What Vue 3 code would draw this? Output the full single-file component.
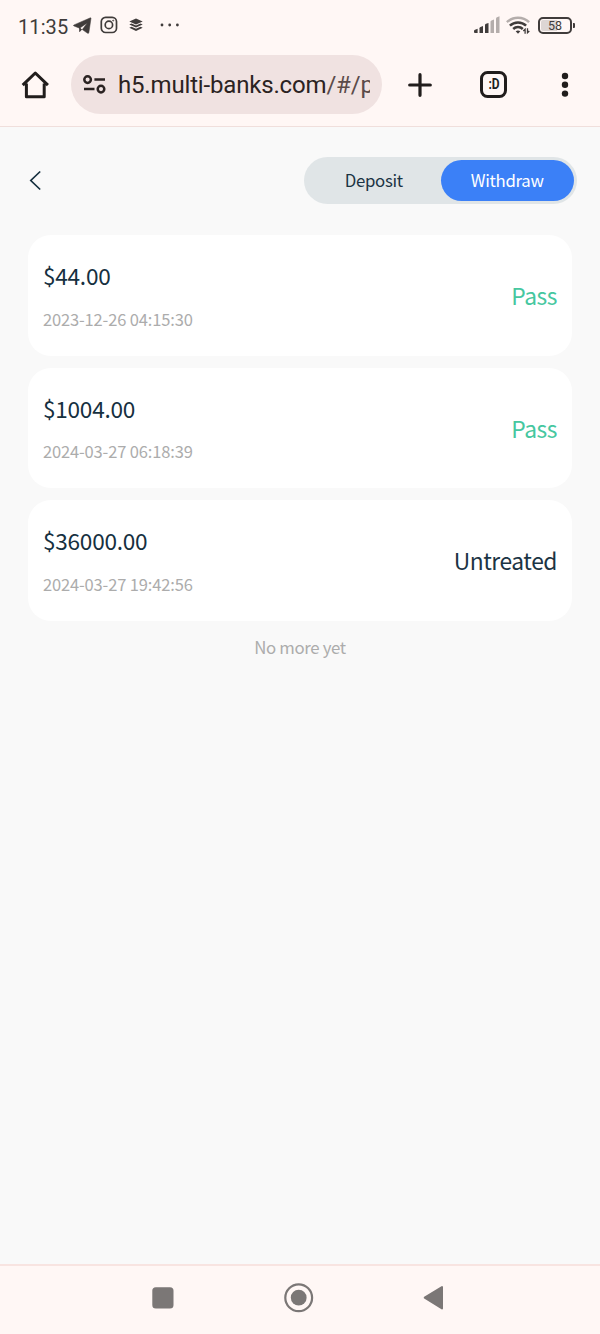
<script setup>
import { ref } from 'vue'

const tabs = ['Deposit', 'Withdraw']
const active = ref('Withdraw')
const records = [
  { amount: '$44.00', time: '2023-12-26 04:15:30', status: 'Pass' },
  { amount: '$1004.00', time: '2024-03-27 06:18:39', status: 'Pass' },
  { amount: '$36000.00', time: '2024-03-27 19:42:56', status: 'Untreated' },
]
</script>

<template>
  <div class="screen">
    <header class="chrome">
      <div class="status">
        <div class="status-left">
          <span class="clock">11:35</span>
          <svg class="telegram" width="19" height="18" viewBox="0 0 19 18">
            <path d="M18 1.300 15.900 15.400q-.3 1.500-1.600.7L9.300 12.600 14.300 6 6.600 11.200 1 9q-1.200-.5 0-1.100L16.900 1q1.200-.5 1.100.3Z" fill="#403c3b" stroke="#403c3b" stroke-width=".5" />
            <path d="M6.700 11 8.600 12.500 6.700 14.600Z" fill="#403c3b" stroke="#403c3b" stroke-width=".9" />
          </svg>
          <svg class="insta" width="18" height="18" viewBox="0 0 18 18" fill="none" stroke="#403c3b">
            <rect x="1.300" y="1.300" width="15.200" height="15.200" rx="4.300" stroke-width="1.700" />
            <circle cx="8.900" cy="8.900" r="3.700" stroke-width="1.700" />
            <circle cx="13.200" cy="4.600" r=".5" stroke-width="1" />
          </svg>
          <svg class="layers" width="14" height="14" viewBox="0 0 14 14" fill="#403c3b">
            <path d="M7 .5 13.700 3.500 7 6.500.3 3.500Z" />
            <path d="m.3 6.400 2.200-1L7 7.500l4.500-2.100 2.200 1L7 9.600Z" />
            <path d="m.3 9.700 2.200-1L7 10.800l4.500-2.100 2.200 1L7 12.900Z" />
          </svg>
          <svg class="dots" width="20" height="4" viewBox="0 0 20 4" fill="#403c3b">
            <circle cx="2" cy="2" r="1.400" /><circle cx="9.700" cy="2" r="1.400" /><circle cx="17.400" cy="2" r="1.400" />
          </svg>
        </div>
        <div class="status-right">
          <svg width="26" height="18" viewBox="0 0 26 18">
            <g fill="#403c3b">
              <path d="M0 15q0-.8 1-1.200l2.600-1V17H1q-1 0-1-1Z" />
              <path d="M5.500 12.200q0-.9 1-1.300l2.500-.9v7H5.500Z" />
              <path d="M11 9.100q0-.9 1-1.300l2.500-.9V17H11Z" />
            </g>
            <g fill="#b4adab">
              <path d="M16.500 5.700q0-.9 1-1.300l2.500-.9V17h-3.500Z" />
              <path d="M22 2.500q0-.9 1-1.300l2.500-.9V17H22Z" />
            </g>
          </svg>
          <svg class="wifi" width="25" height="20" viewBox="0 0 25 20" fill="none" stroke-width="2.500">
            <path d="M.9 7.200A16 16 0 0 1 23.100 7.200" stroke="#b4adab" />
            <path d="M3.900 10.700A11.700 11.700 0 0 1 20.100 10.700M7.200 14A7 7 0 0 1 16.800 14" stroke="#403c3b" />
            <path d="M9.700 16.200q2.300-1.500 4.600 0L12 18.800Z" fill="#403c3b" />
            <path d="m17.300 16 1.800-1.800v4.600M23.300 16l-1.800 1.800v-4.600" stroke="#403c3b" stroke-width="1.300" />
          </svg>
          <div class="battery"><span>58</span></div>
          <i class="battery-tip"></i>
        </div>
      </div>
      <div class="toolbar">
        <svg class="home" width="28" height="28" viewBox="0 0 28 28" fill="none" stroke="#211d1c" stroke-width="3" stroke-linejoin="round">
          <path d="M1.700 14.200 14.300 2l12.600 12.200M5.400 12.500v13.200h17.800V12.500" />
        </svg>
        <div class="address">
          <svg width="24" height="20" viewBox="0 0 24 20" fill="none" stroke="#2b2322" stroke-width="2.500">
            <circle cx="4.600" cy="4.600" r="3.300" /><circle cx="18" cy="14.100" r="3.300" />
            <path d="M11.400 4.600H22M1 14.100h10.500" />
          </svg>
          <div class="url">h5.multi-banks.com<span>/#/p</span></div>
        </div>
        <svg class="plus" width="24" height="24" viewBox="0 0 24 24" stroke="#211d1c" stroke-width="3.200" stroke-linecap="round">
          <path d="M12 1.700v20.600M1.700 12h20.600" />
        </svg>
        <div class="tab-count"><span>:D</span></div>
        <svg class="kebab" width="8" height="26" viewBox="0 0 8 26" fill="#211d1c">
          <circle cx="4" cy="4" r="3.200" /><circle cx="4" cy="12.800" r="3.200" /><circle cx="4" cy="21.600" r="3.200" />
        </svg>
      </div>
    </header>

    <main class="page">
      <div class="topbar">
        <svg class="back" width="13" height="21" viewBox="0 0 13 21" fill="none" stroke="#16303f" stroke-width="1.700">
          <path d="M11.200 1.500 1.800 10.500l9.400 9" />
        </svg>
        <div class="switch">
          <button v-for="t in tabs" :key="t" :class="{ on: t === active }" @click="active = t">{{ t }}</button>
        </div>
      </div>
      <section class="list">
        <article v-for="r in records" :key="r.time" class="card">
          <div>
            <div class="amount">{{ r.amount }}</div>
            <div class="time">{{ r.time }}</div>
          </div>
          <div class="state" :class="{ pass: r.status === 'Pass' }">{{ r.status }}</div>
        </article>
      </section>
      <p class="end">No more yet</p>
    </main>

    <nav class="nav">
      <svg width="22" height="22" viewBox="0 0 22 22"><rect x=".3" y=".3" width="21.200" height="21.200" rx="3.500" fill="#7b7776" /></svg>
      <svg class="nav-home" width="30" height="30" viewBox="0 0 30 30">
        <circle cx="14.700" cy="14.700" r="13.400" fill="none" stroke="#7b7776" stroke-width="2.200" />
        <circle cx="14.700" cy="14.700" r="7.900" fill="#7b7776" />
      </svg>
      <svg class="nav-back" width="21" height="26" viewBox="0 0 21 26">
        <path d="M1.700 12.700 19 2v21.400Z" fill="#7b7776" stroke="#7b7776" stroke-width="2" stroke-linejoin="round" />
      </svg>
    </nav>
  </div>
</template>

<style>
body {
  margin: 0;
  background: #f9f9f9;
}
</style>

<style scoped>
.screen {
  width: 600px;
  height: 1334px;
  display: flex;
  flex-direction: column;
  overflow: hidden;
  background: #f9f9f9;
  font-family: "Noto Sans CJK SC", sans-serif;
}
svg {
  display: block;
  flex: none;
}
.chrome {
  box-sizing: border-box;
  height: 127px;
  background: #fff7f5;
  border-bottom: 1.500px solid #f0dfdc;
  font-family: Roboto, sans-serif;
}
.status {
  height: 50px;
  display: flex;
  justify-content: space-between;
  padding: 0 25px 0 18px;
}
.status-left,
.status-right {
  display: flex;
  align-items: center;
}
.clock {
  width: 50px;
  font-size: 20px;
  line-height: 24px;
  letter-spacing: 0.1px;
  color: #403c3b;
  margin-top: 3px;
}
.telegram {
  margin: 1px 0 0 5px;
}
.insta {
  margin-left: 8px;
}
.layers {
  margin-left: 11px;
}
.dots {
  margin-left: 17px;
}
.wifi {
  margin: 0 7px 0 6px;
}
.battery {
  box-sizing: border-box;
  width: 34px;
  height: 17px;
  border: 2px solid #403c3b;
  border-radius: 5px;
  background: linear-gradient(90deg, #ddd6d4 57%, transparent 57%);
  background-clip: content-box;
  padding: 1px;
  display: flex;
  align-items: center;
  justify-content: center;
  font-size: 12.500px;
  line-height: 13px;
  color: #403c3b;
}
.battery span {
  margin-top: 1px;
}
.battery-tip {
  width: 2px;
  height: 5px;
  margin-left: 1px;
  border-radius: 0 1px 1px 0;
  background: #403c3b;
}
.toolbar {
  height: 69px;
  display: flex;
  align-items: center;
  padding-left: 21px;
}
.address {
  box-sizing: border-box;
  width: 311px;
  height: 59px;
  margin-left: 22px;
  padding-left: 12px;
  border-radius: 30px;
  background: #f0e2e1;
  display: flex;
  align-items: center;
}
.url {
  width: 252px;
  margin-left: 11px;
  overflow: hidden;
  white-space: nowrap;
  font-size: 24px;
  line-height: 32px;
  letter-spacing: -0.170px;
  color: #2b2322;
}
.url span {
  color: #5b4b4a;
}
.plus {
  margin-left: 26px;
}
.tab-count {
  box-sizing: border-box;
  width: 27px;
  height: 27px;
  margin-left: 48px;
  border: 3px solid #211d1c;
  border-radius: 7.500px;
  color: #211d1c;
  font: 700 15px/21px Roboto, sans-serif;
  display: flex;
  justify-content: center;
}
.tab-count span {
  transform: scaleX(0.800);
}
.kebab {
  margin-left: 53.500px;
}
.page {
  flex: 1;
  box-sizing: border-box;
  padding: 30px 28px 0;
}
.topbar {
  height: 47px;
  display: flex;
  justify-content: space-between;
  align-items: center;
  margin-right: -5px;
}
.back {
  margin-left: 1px;
}
.switch {
  box-sizing: border-box;
  width: 273px;
  height: 47px;
  padding: 3px;
  border-radius: 24px;
  background: #e0e5e7;
  display: flex;
}
.switch button {
  flex: 1;
  padding: 0;
  border: 0;
  border-radius: 21px;
  background: none;
  font: 400 16.800px/41px "Noto Sans CJK SC", sans-serif;
  letter-spacing: -0.300px;
  color: #1c3444;
}
.switch button.on {
  background: #3b80f7;
  color: #fff;
}
.list {
  margin-top: 31px;
  display: grid;
  gap: 12px;
}
.card {
  box-sizing: border-box;
  height: 120.500px;
  padding: 0 15px;
  border-radius: 23px;
  background: #fff;
  display: flex;
  align-items: center;
  justify-content: space-between;
}
.amount {
  margin-top: 0.500px;
  font-size: 22.600px;
  line-height: 32px;
  letter-spacing: -0.250px;
  color: #16303f;
}
.time {
  margin-top: 14.400px;
  font-size: 16.500px;
  line-height: 24px;
  letter-spacing: -0.150px;
  color: #acacac;
}
.state {
  margin-top: 2px;
  font-size: 22.800px;
  line-height: 32px;
  letter-spacing: -0.450px;
  color: #1c3444;
}
.state.pass {
  color: #46c7a0;
}
.end {
  margin: 14.500px 0 0;
  font-size: 16.800px;
  line-height: 25px;
  letter-spacing: -0.350px;
  text-align: center;
  color: #acacac;
}
.nav {
  box-sizing: border-box;
  height: 70px;
  padding: 0 0 4px 152px;
  border-top: 2px solid #f8e4e1;
  background: #fff7f5;
  display: flex;
  align-items: center;
}
.nav-home {
  margin-left: 110px;
}
.nav-back {
  margin-left: 109px;
}
</style>
